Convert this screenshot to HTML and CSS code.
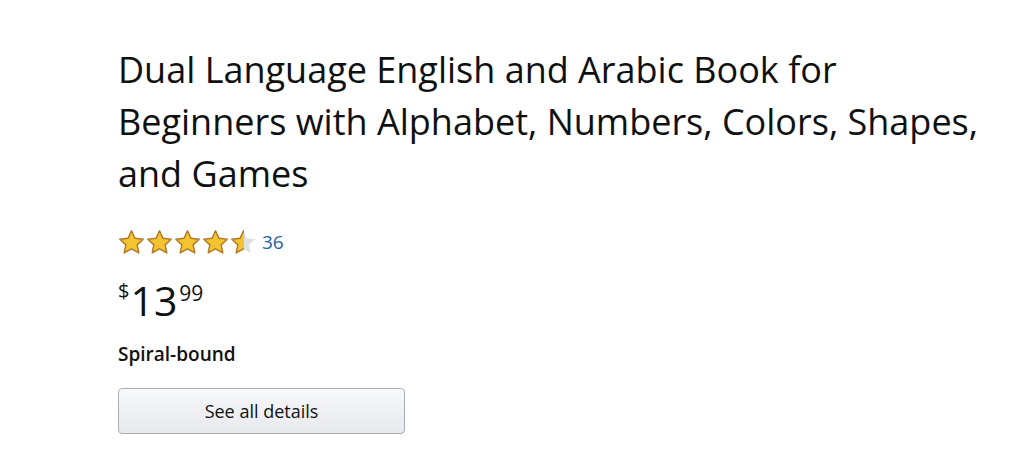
FILE: index.html
```html
<!DOCTYPE html>
<html>
<head>
<meta charset="utf-8">
<link rel="stylesheet" href="styles.css">
</head>
<body>
<div class="product">
  <h1 class="title">Dual Language English and Arabic Book for Beginners with Alphabet, Numbers, Colors, Shapes, and Games</h1>
  <div class="rating">
    <div class="stars">
      <svg class="star" viewBox="0 0 24 24"><path d="M12 1.6l3.1 6.7 7.3.8-5.4 5 1.5 7.2L12 17.7l-6.5 3.6 1.5-7.2-5.4-5 7.3-.8z" fill="#f4c430" stroke="#b27a26" stroke-width="1.3" stroke-linejoin="round"/></svg>
      <svg class="star" viewBox="0 0 24 24"><path d="M12 1.6l3.1 6.7 7.3.8-5.4 5 1.5 7.2L12 17.7l-6.5 3.6 1.5-7.2-5.4-5 7.3-.8z" fill="#f4c430" stroke="#b27a26" stroke-width="1.3" stroke-linejoin="round"/></svg>
      <svg class="star" viewBox="0 0 24 24"><path d="M12 1.6l3.1 6.7 7.3.8-5.4 5 1.5 7.2L12 17.7l-6.5 3.6 1.5-7.2-5.4-5 7.3-.8z" fill="#f4c430" stroke="#b27a26" stroke-width="1.3" stroke-linejoin="round"/></svg>
      <svg class="star" viewBox="0 0 24 24"><path d="M12 1.6l3.1 6.7 7.3.8-5.4 5 1.5 7.2L12 17.7l-6.5 3.6 1.5-7.2-5.4-5 7.3-.8z" fill="#f4c430" stroke="#b27a26" stroke-width="1.3" stroke-linejoin="round"/></svg>
      <svg class="star" viewBox="0 0 24 24"><defs><clipPath id="half"><rect x="0" y="0" width="12.5" height="24"/></clipPath></defs><path d="M12 1.6l3.1 6.7 7.3.8-5.4 5 1.5 7.2L12 17.7l-6.5 3.6 1.5-7.2-5.4-5 7.3-.8z" fill="#dde1e0"/><g clip-path="url(#half)"><path d="M12 1.6l3.1 6.7 7.3.8-5.4 5 1.5 7.2L12 17.7l-6.5 3.6 1.5-7.2-5.4-5 7.3-.8z" fill="#f4c430" stroke="#b27a26" stroke-width="1.3" stroke-linejoin="round"/></g></svg>
    </div>
    <a class="count" href="#">36</a>
  </div>
  <div class="price"><span class="sym">$</span><span class="whole">13</span><span class="frac">99</span></div>
  <div class="format">Spiral-bound</div>
  <button class="details">See all details</button>
</div>
</body>
</html>
```
FILE: styles.css
```css
html, body {
  margin: 0;
  background: #ffffff;
}
body {
  font-family: "Open Sans", "Noto Sans", Arial, sans-serif;
  color: #0f1111;
}
.product {
  padding: 44px 0 0 118px;
  display: flex;
  flex-direction: column;
  align-items: flex-start;
}
.title {
  margin: 0;
  width: 870px;
  font-weight: 400;
  font-size: 36px;
  line-height: 52px;
  color: #0f1111;
}
.rating {
  display: flex;
  align-items: center;
  margin-top: 29px;
  height: 26px;
}
.stars {
  display: flex;
}
.star {
  width: 27px;
  height: 27px;
  margin-right: 1px;
}
.count {
  margin-left: 4px;
  font-size: 19px;
  color: #2162a1;
  text-decoration: none;
}
.price {
  display: flex;
  align-items: flex-start;
  margin-top: 25px;
  line-height: 1;
}
.sym {
  font-size: 20px;
  margin-top: 1px;
}
.whole {
  font-size: 41px;
  line-height: 40px;
  margin-left: 1px;
}
.frac {
  font-size: 21px;
  margin-top: 3px;
  margin-left: 2px;
}
.format {
  margin-top: 22px;
  font-size: 19px;
  font-weight: 600;
  line-height: 24px;
}
.details {
  margin-top: 22px;
  width: 287px;
  height: 46px;
  border: 1px solid #a9acb1;
  border-radius: 4px;
  background: linear-gradient(#f7f8fa, #e7e9ec);
  font-family: inherit;
  font-size: 18px;
  color: #0f1111;
  padding: 0;
}
```
